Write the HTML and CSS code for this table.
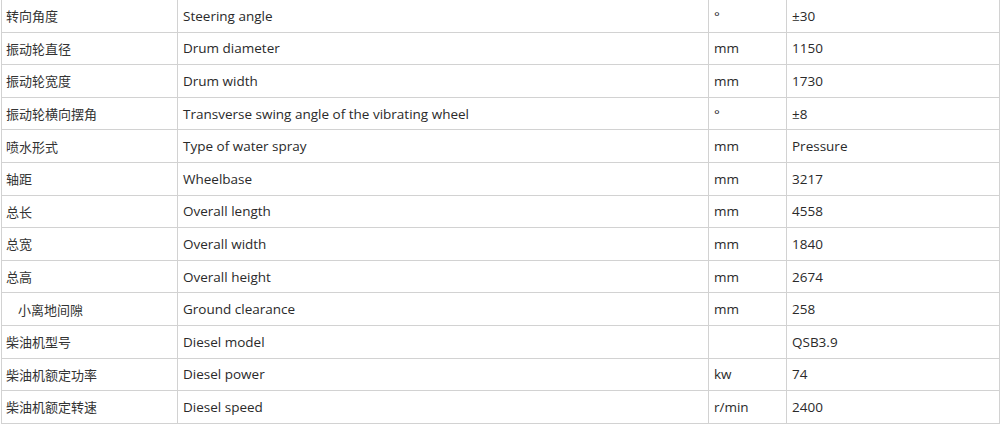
FILE: index.html
```html
<!DOCTYPE html>
<html>
<head>
<meta charset="utf-8">
<link rel="stylesheet" href="styles.css">
</head>
<body>
<table class="spec">
<colgroup><col class="c1"><col class="c2"><col class="c3"><col class="c4"></colgroup>
<tbody>
<tr><td class="zh">转向角度</td><td>Steering angle</td><td>°</td><td>±30</td></tr>
<tr><td class="zh">振动轮直径</td><td>Drum diameter</td><td>mm</td><td>1150</td></tr>
<tr><td class="zh">振动轮宽度</td><td>Drum width</td><td>mm</td><td>1730</td></tr>
<tr><td class="zh">振动轮横向摆角</td><td>Transverse swing angle of the vibrating wheel</td><td>°</td><td>±8</td></tr>
<tr><td class="zh">喷水形式</td><td>Type of water spray</td><td>mm</td><td>Pressure</td></tr>
<tr><td class="zh">轴距</td><td>Wheelbase</td><td>mm</td><td>3217</td></tr>
<tr><td class="zh">总长</td><td>Overall length</td><td>mm</td><td>4558</td></tr>
<tr><td class="zh">总宽</td><td>Overall width</td><td>mm</td><td>1840</td></tr>
<tr><td class="zh">总高</td><td>Overall height</td><td>mm</td><td>2674</td></tr>
<tr><td class="zh indent">小离地间隙</td><td>Ground clearance</td><td>mm</td><td>258</td></tr>
<tr><td class="zh">柴油机型号</td><td>Diesel model</td><td></td><td>QSB3.9</td></tr>
<tr><td class="zh">柴油机额定功率</td><td>Diesel power</td><td>kw</td><td>74</td></tr>
<tr><td class="zh">柴油机额定转速</td><td>Diesel speed</td><td>r/min</td><td>2400</td></tr>
</tbody>
</table>
</body>
</html>
```
FILE: styles.css
```css
html, body {
  margin: 0;
  padding: 0;
  background: #fff;
}
.spec {
  border-collapse: collapse;
  table-layout: fixed;
  width: 998px;
  margin: -1px 0 0 1px;
  font-family: "Open Sans", "Noto Sans CJK SC", sans-serif;
  font-size: 13.5px;
  color: #2a2a2a;
}
.c1 { width: 176px; }
.c2 { width: 531px; }
.c3 { width: 78px; }
.c4 { width: 213px; }
.spec td {
  border: 1px solid #d2d2d2;
  height: 31.6px;
  padding: 0 4px 0 5px;
  vertical-align: middle;
  white-space: nowrap;
}
.spec td.zh {
  font-family: "Noto Sans CJK SC", sans-serif;
  font-size: 13px;
  color: #333;
  padding-left: 4px;
}
.spec td.indent {
  padding-left: 16px;
}
```
